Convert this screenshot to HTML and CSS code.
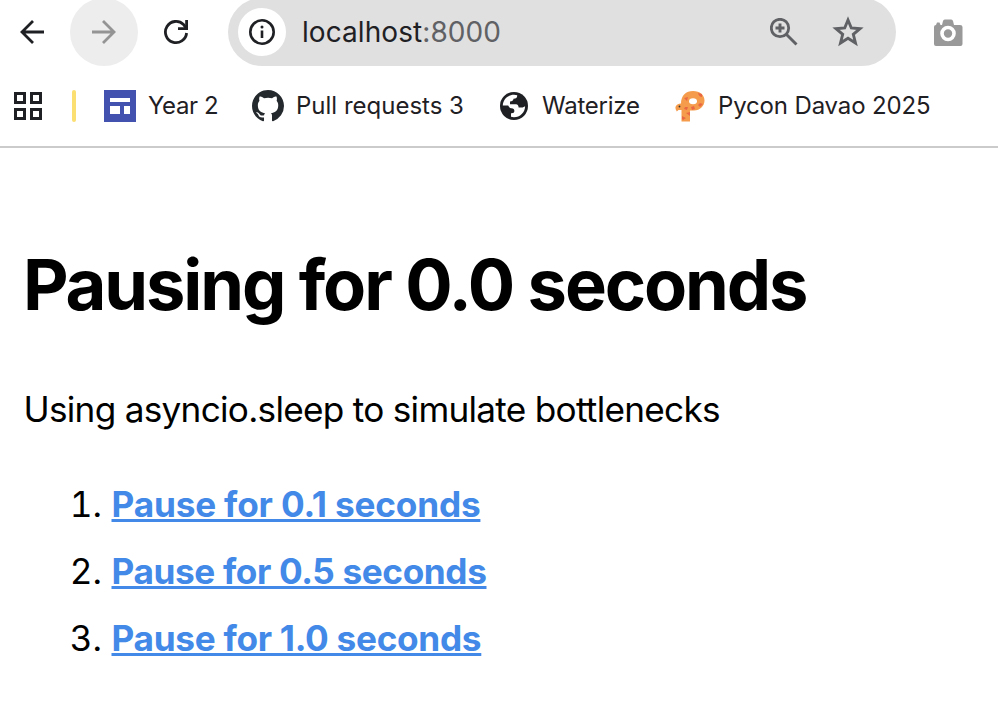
FILE: index.html
```html
<!DOCTYPE html>
<html lang="en">
<head>
<meta charset="utf-8">
<title>Pausing for 0.0 seconds</title>
<link rel="stylesheet" href="styles.css">
</head>
<body>
<header class="browser">
  <div class="toolbar">
    <button class="nav" aria-label="Back"><svg width="24" height="24" viewBox="0 0 24 24"><path d="M24 12H2M13 1 2 12l11 11" fill="none" stroke="#1f2024" stroke-width="2.8"/></svg></button>
    <button class="nav nav-forward" aria-label="Forward"><svg width="24" height="24" viewBox="0 0 24 24"><path d="M0 12H22M11 1l11 11-11 11" fill="none" stroke="#949494" stroke-width="2.8"/></svg></button>
    <button class="nav nav-reload" aria-label="Reload"><svg width="26" height="26" viewBox="0 0 26 26"><path d="M23.6 14A10.600 10.600 0 1 1 20.500 5.500L23 9" fill="none" stroke="#1f2024" stroke-width="2.8"/><path d="M22.200 1H25v10H15V8.200h7.200z" fill="#1f2024"/></svg></button>
    <div class="address">
      <span class="info"><svg width="26" height="26" viewBox="0 0 26 26"><circle cx="13" cy="13" r="11.700" fill="none" stroke="#1f2024" stroke-width="2.600"/><circle cx="13" cy="7.900" r="1.500" fill="#1f2024"/><path d="M13 11.500v7.500" stroke="#1f2024" stroke-width="2.600"/></svg></span>
      <span class="url">localhost<span class="port">:8000</span></span>
      <svg class="magnifier" width="28" height="28" viewBox="0 0 28 28"><g fill="none" stroke="#5f6164"><circle cx="10" cy="10" r="8.700" stroke-width="2.800"/><path d="m16.500 16.500 10 10M10 5.500v9M5.500 10h9" stroke-width="2.900"/></g></svg>
      <svg class="star" width="32" height="32" viewBox="0 0 32 32"><path d="m16 4 3.300 8 8.700.700-6.700 5.600 2.200 8.700-7.500-4.700-7.500 4.700 2.200-8.700L4 12.700l8.700-.7z" fill="none" stroke="#5f6164" stroke-width="2.900"/></svg>
    </div>
    <svg class="camera" width="30" height="28" viewBox="0 0 30 28"><path d="M1 8q0-2 2-2l1-2.500h2.500L7.500 6H9l1-4q.3-1.500 1.800-1.500h6.400q1.500 0 1.800 1.500l1 4h6q2.500 0 2.500 2v17q0 2-2 2H3q-2 0-2-2z" fill="#999"/><circle cx="15" cy="14.500" r="6" fill="#999" stroke="#fff" stroke-width="3.600"/></svg>
  </div>
  <nav class="bookmarks">
    <svg class="apps" width="28" height="28" viewBox="0 0 28 28"><path d="M1.500 1.500h9v9h-9zm16 0h9v9h-9zm-16 16h9v9h-9zm16 0h9v9h-9z" fill="none" stroke="#1f2024" stroke-width="3"/></svg>
    <span class="group"></span>
    <a class="bookmark b-year"><svg width="32" height="32" viewBox="0 0 32 32"><path d="M0 0h32v32H0z" fill="#4351af"/><path d="M6 8h20v4H6zm0 8h10v8H6zm14 0h6v8h-6z" fill="#fff"/></svg><span>Year 2</span></a>
    <a class="bookmark b-pull"><svg width="32" height="32" viewBox="0 0 16 16"><path fill="#24292e" d="M8 0C3.580 0 0 3.580 0 8c0 3.540 2.290 6.530 5.470 7.590.4.070.55-.17.55-.38 0-.19-.01-.82-.01-1.490-2.010.37-2.530-.49-2.690-.94-.09-.23-.48-.94-.82-1.130-.28-.15-.68-.52-.01-.53.630-.01 1.080.58 1.230.82.720 1.210 1.870.87 2.330.66.070-.52.280-.87.510-1.070-1.780-.2-3.640-.89-3.640-3.950 0-.87.310-1.590.82-2.150-.08-.2-.36-1.020.08-2.120 0 0 .67-.21 2.200.82.640-.18 1.320-.27 2-.27s1.360.09 2 .27c1.530-1.040 2.200-.82 2.200-.82.440 1.100.16 1.920.08 2.120.51.560.82 1.270.82 2.150 0 3.070-1.870 3.750-3.650 3.950.29.250.54.730.54 1.480 0 1.070-.01 1.930-.01 2.200 0 .21.150.46.550.38A8.010 8.010 0 0 0 16 8c0-4.420-3.580-8-8-8z"/></svg><span>Pull requests 3</span></a>
    <a class="bookmark b-water"><svg width="28" height="28" viewBox="0 0 28 28"><circle cx="14" cy="14" r="14" fill="#1f2024"/><path d="M2.800 13.500C3 7.500 8 2.800 14 2.800q2 0 3.200.5.300 3.200-3.700 3.400-.3 2.600-3.500 2.700v2.800h6q2.600.3 2.600 3.400h4l2.500-1.400C25 20.500 20 25.200 14 25.200q-1.800 0-3-.4v-3.500q3.500.3 3.400-2.200 0-2.700-3-2.900-2 0-3.200-2.700z" fill="#fff"/></svg><span>Waterize</span></a>
    <a class="bookmark b-pycon"><svg width="30" height="32" viewBox="0 0 30 32"><path d="M6.500 31.500V20H3.500l-1.700 1.500Q-.5 18 1 16q1.200-2.500 5-2.500C6 5.500 11 1 18 1c7 0 11.500 4 11.500 9.500S25 20.500 19 20.500h-4v11z" fill="#f59c4c"/><ellipse cx="18" cy="11.300" rx="4" ry="3" fill="#fff"/><circle cx="4.500" cy="16.500" r=".9" fill="#333"/><path d="m23 3 4 1v3q-3 0-4-4zM9 8l4-1-1 4zm16 5 3 1-3 3-2-2zm-9 4 3-1 1 3-3 1zm-6 0h3l-1 3-3-1zm1 6 4-1v4zm-4 3 4 2-3 2-1-1z" fill="#e96843"/></svg><span>Pycon Davao 2025</span></a>
  </nav>
</header>
<main class="page">
  <h1>Pausing for 0.0 seconds</h1>
  <p>Using asyncio.sleep to simulate bottlenecks</p>
  <ol>
    <li><a class="l1" href="#">Pause for 0.1 seconds</a></li>
    <li><a class="l2" href="#">Pause for 0.5 seconds</a></li>
    <li><a class="l3" href="#">Pause for 1.0 seconds</a></li>
  </ol>
</main>
</body>
</html>
```
FILE: styles.css
```css
* { box-sizing: border-box; }
body { margin: 0; background: #fff; color: #000; font-family: Inter, "Liberation Sans", sans-serif; overflow: hidden; }
svg { display: block; flex: none; }
.browser { height: 148px; border-bottom: 2px solid #cbcbcb; }
.toolbar { display: flex; height: 66px; align-items: flex-start; }
.nav { display: flex; align-items: center; justify-content: center; width: 68px; height: 68px; margin: -2px 0 0; padding: 0; border: 0; border-radius: 50%; background: none; flex: none; }
.nav:first-child { margin-left: -2px; }
.nav-forward { margin-left: 4px; background: #ededed; }
.nav-reload { margin-left: 4px; }
.address { display: flex; align-items: center; width: 668px; height: 68px; margin: -2px 0 0 18px; padding-left: 10px; border-radius: 34px; background: #e0e0e0; flex: none; }
.info { display: flex; align-items: center; justify-content: center; width: 48px; height: 48px; border-radius: 50%; background: #fff; }
.url { width: 484px; padding-left: 16px; font-size: 28px; line-height: 34px; letter-spacing: .07px; color: #1f2024; }
.port { color: #5f6164; }
.star { margin-left: 34px; }
.camera { margin: 19px 0 0 37px; }
.bookmarks { display: flex; align-items: center; height: 80px; padding-left: 14px; }
.group { width: 4px; height: 32px; margin: 0 28px 0 30px; border-radius: 2px; background: #fbdf72; flex: none; }
.bookmark { display: flex; align-items: center; flex: none; gap: 12px; font-size: 24px; line-height: 30px; color: #1f2024; white-space: nowrap; }
.b-year { width: 148px; letter-spacing: -.4px; }
.b-pull { width: 248px; }
.b-water { width: 175px; gap: 14px; letter-spacing: -.25px; }
.b-pycon { gap: 13px; letter-spacing: -.15px; }
.page { padding: 0 24px; }
h1 { margin: 94px 0 0 -1px; font-size: 70.4px; line-height: 86px; font-weight: 700; letter-spacing: -2.14px; white-space: nowrap; }
p { margin: 59px 0 0 -.5px; font-size: 35.2px; line-height: 44px; letter-spacing: -.73px; white-space: nowrap; }
ol { margin: 40px 0 0; padding-left: 87.5px; font-size: 35.2px; line-height: 67px; }
a { color: inherit; }
ol a { color: #4289e8; font-weight: 700; text-decoration-thickness: 3px; }
.l1 { letter-spacing: -.18px; }
.l2 { letter-spacing: -.38px; }
.l3 { letter-spacing: -.29px; }
```
